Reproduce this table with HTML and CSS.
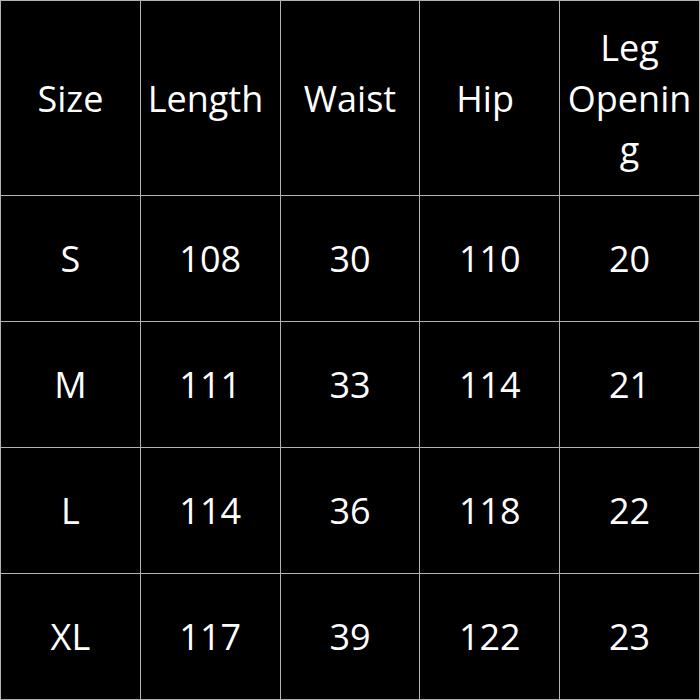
FILE: index.html
```html
<!DOCTYPE html>
<html>
<head>
<meta charset="utf-8">
<link rel="stylesheet" href="styles.css">
</head>
<body>
<table class="size-table">
  <tr class="head">
    <td>Size</td><td>Length&nbsp;</td><td>Waist</td><td>Hip&nbsp;</td><td>Leg Opening</td>
  </tr>
  <tr class="row"><td>S</td><td>108</td><td>30</td><td>110</td><td>20</td></tr>
  <tr class="row"><td>M</td><td>111</td><td>33</td><td>114</td><td>21</td></tr>
  <tr class="row"><td>L</td><td>114</td><td>36</td><td>118</td><td>22</td></tr>
  <tr class="row"><td>XL</td><td>117</td><td>39</td><td>122</td><td>23</td></tr>
</table>
</body>
</html>
```
FILE: styles.css
```css
html, body {
  margin: 0;
  padding: 0;
  background: #000;
}
.size-table {
  width: 700px;
  height: 700px;
  border-collapse: collapse;
  table-layout: fixed;
  font-family: "Open Sans", sans-serif;
  font-size: 36px;
  color: #fff;
  background: #000;
}
.size-table td {
  border: 1px solid #b4b4b4;
  text-align: center;
  vertical-align: middle;
  padding: 0 4px;
  overflow-wrap: break-word;
  line-height: 51px;
}
.head {
  height: 195px;
}
.row {
  height: 126px;
}
```
